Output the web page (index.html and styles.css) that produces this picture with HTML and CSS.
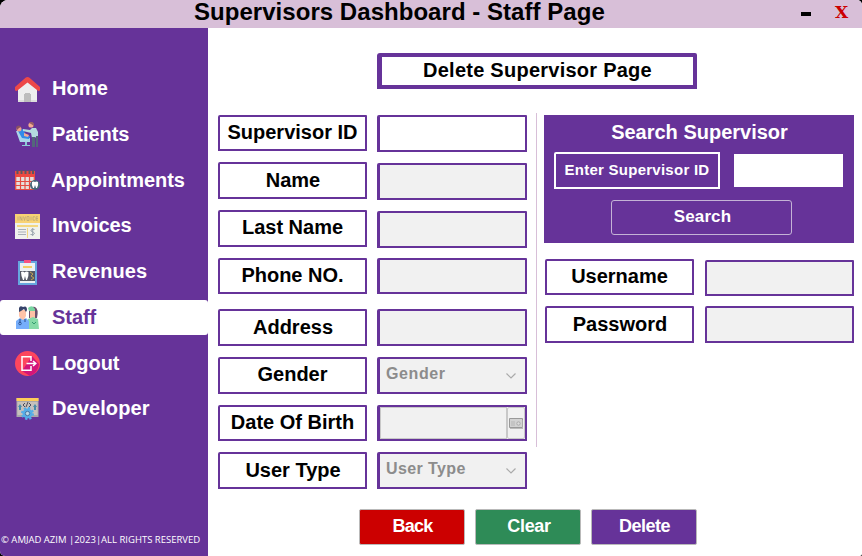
FILE: index.html
```html
<!DOCTYPE html>
<html lang="en">
<head>
<meta charset="utf-8">
<title>Supervisors Dashboard - Staff Page</title>
<link rel="stylesheet" href="styles.css">
</head>
<body>
<div class="window">
  <header class="titlebar">
    <h1>Supervisors Dashboard - Staff Page</h1>
    <div class="controls"><span class="minimize"></span><span class="close">X</span></div>
  </header>
  <div class="body">
    <aside class="sidebar">
      <nav>
        <a class="item"><svg viewBox="0 0 25 25"><path d="M3 12 12.500 4 22 12V25H3z" fill="#eee"/><path d="M3 23h19v2H3z" fill="#ddd"/><path d="M9 25v-8h1v-1h5v1h1v8z" fill="#bdbdbd"/><path d="M0 10 10.500.8Q12.500-.6 14.500.8L25 10v3q-1 2-3 0L12.500 5.500 3 13Q1 15 0 13z" fill="#ed4848"/></svg><span class="wide">Home</span></a>
        <a class="item"><svg viewBox="0 0 25 25"><path d="M1 9h4l3 6 7 1v4H5z" fill="#a9d6ea"/><path d="M3 9l5-2 3 6 4 1-1 3-7-1z" fill="#328be9"/><path d="M9 11l5 2-1 2-4-1z" fill="#f4ad95"/><circle cx="4" cy="7" r="2.500" fill="#efa28f"/><path d="M1 5q3-3 5 0l-2 1-2 2z" fill="#8a5261"/><path d="M10 20h2v3h3v1H7v-1h3z" fill="#8cc9d6"/><circle cx="16" cy="3" r="2.600" fill="#f5aa91"/><path d="M14 1q3-3 5 1v2l-3-2z" fill="#985f68"/><path d="M17 6h4l2 4v5l-6 1-1-5-8-2V7l7 1z" fill="#b4dcdf"/><path d="M17 15h3v10h-3zM21 14h2v11h-2z" fill="#53677b"/></svg><span>Patients</span></a>
        <a class="item"><svg viewBox="0 0 25 25"><path d="M0 3h20v19H0z" fill="#e6dedb"/><path d="M0 3h20v6H0z" fill="#ed4940"/><g stroke="#e54b42" stroke-width="1.200"><path d="M0 21.500h20M0 17.500h20M0 13.500h20M.7 9v13M5.500 9v13M10 9v13M14.500 9v13M19.300 9v8"/></g><path d="M1.500 2h2v4h-2zM5.500 2h2v4h-2zM9.500 2h2v4h-2zM13.500 2h2v4h-2zM17 2h2v4h-2z" fill="#5c5661"/><circle cx="20" cy="17" r="5" fill="#46677a"/><path d="M17 14q1.500-1 3 0 1.500-1 3 0 .7 2-1 6h-1l-1-3-1 3h-1q-1.700-4-1-6z" fill="#fff"/></svg><span class="pull">Appointments</span></a>
        <a class="item"><svg viewBox="0 0 25 25"><path d="M0 0h25v25H0z" fill="#f0f1ed"/><path d="M0 0h25v9H0z" fill="#f8d274"/><path d="M3 2.500v4M5 6.500v-4l2 4v-4M8.500 2.500l1 4 1-4M12 2.500h2v4h-2zM16 2.500v4M20 2.800h-2v3.400h2M23 2.800h-2v3.400h2M21 4.500h2" fill="none" stroke="#b9a778" stroke-width=".8"/><path d="M2 11h21v2H2zM12 14h1v10h-1z" fill="#f4d77f"/><path d="M3 15.500h8M3 18h8M3 20.500h8" stroke="#a9b0b8"/><path d="M19.500 15.500q-4-1-3.500 1.500 3 1 3.500 2.500-1 2-4 1M17.700 14v8" fill="none" stroke="#9aa4ae"/></svg><span>Invoices</span></a>
        <a class="item"><svg viewBox="0 0 25 25"><path d="M3 1h19v24H3z" fill="#66a7de"/><path d="M5 3h15v20H5z" fill="#edf1f3"/><path d="M9 0h7v3H9z" fill="#f65282"/><path d="M8 6h9v2H8z" fill="#f4cd66"/><path d="M5 11h15v10H5z" fill="#555965"/><path d="M6 12q2-1 3.500.4Q11 11 13.500 12q.5 3-1.500 8h-1l-1-4-1 4H8q-2-4-2-8z" fill="#fff"/><path d="M15 12l3 2-2 2 3 2-3 2" fill="none" stroke="#c2a354"/></svg><span class="mid">Revenues</span></a>
        <a class="item active"><svg viewBox="0 0 25 25"><path d="M14 6q1-5 6-4 4 2 2 11h-8z" fill="#6b4f6c"/><path d="M15 6h5v9h-5z" fill="#ffc1a5"/><path d="M13 3q4-4 7 1v2h-6z" fill="#78d6a0"/><path d="M12 24l1-10 5-2 5 2 1 10z" fill="#86daa8"/><path d="M4 5h7v6L9 15H6l-2-4z" fill="#ffc3a9"/><path d="M4 7V3q1-3 4-1 4-2 4 3l-1 2-2-3-3 2z" fill="#37446b"/><path d="M1 24V16l4-3 3 2 3-2 3 3v8z" fill="#76aefb"/><path d="M5 14v4M10 14v3" stroke="#294d8a"/><circle cx="5" cy="18.500" r="1.300" fill="none" stroke="#294d8a" stroke-width=".8"/><path d="M17 17l2 2 2-2" fill="none" stroke="#349b70"/></svg><span>Staff</span></a>
        <a class="item"><svg viewBox="0 0 25 25"><circle cx="12.500" cy="12.500" r="12.500" fill="#fd465e"/><path d="M17 5l7 8q-1 9-9 12l-8-5z" fill="#d2157a"/><path d="M16 10V5.700H7v13.600h9V15M11.500 12.500h9M18 10l2.800 2.500L18 15" fill="none" stroke="#fff" stroke-width="1.500"/></svg><span>Logout</span></a>
        <a class="item"><svg viewBox="0 0 25 25"><path d="M1.500 1h22v19h-22z" fill="#a8a8ab"/><path d="M1.500 1h22v3h-22z" fill="#ffcd59"/><path d="M2.500 5h20v13h-20z" fill="#c7c1bc"/><path d="M3 10l2-3 2 3h-1v3H4v-3zM18 10l2-3 2 3h-1v3h-2v-3z" fill="#498cab"/><path d="M10 6l-2 2 2 2M14 6l2 2-2 2M13 5l-2 5" fill="none" stroke="#4c4e5b"/><circle cx="12.500" cy="16.500" r="5" fill="#55aee8"/><circle cx="12.500" cy="16.500" r="5.500" fill="none" stroke="#55aee8" stroke-width="2" stroke-dasharray="2.300 2"/><circle cx="12.500" cy="16.500" r="2.200" fill="#b9d8e5" stroke="#4776a3"/></svg><span class="mid">Developer</span></a>
      </nav>
      <footer>© AMJAD AZIM |2023|ALL RIGHTS RESERVED</footer>
    </aside>
    <main>
      <h2>Delete Supervisor Page</h2>
      <div class="columns">
        <section class="form">
          <label class="box short">Supervisor ID</label><div class="field enabled"></div>
          <label class="box drop">Name</label><div class="field low"></div>
          <label class="box">Last Name</label><div class="field low"></div>
          <label class="box short">Phone NO.</label><div class="field short"></div>
          <label class="box drop">Address</label><div class="field"></div>
          <label class="box">Gender</label><div class="field combo"><span>Gender</span><svg class="chevron" viewBox="0 0 10 6"><path d="M.5.5 5 5 9.500.5"/></svg></div>
          <label class="box short">Date Of Birth</label><div class="field short date"><span class="entry"></span><span class="picker"><svg viewBox="0 0 14 11"><path d="M.5.500h13v9H.5z" fill="#d2d2d2" stroke="#999"/><path d="M1 10.500h13V2" fill="none" stroke="#bbb"/><path d="M2 3h4v5H2z" fill="#c4c4c4"/><circle cx="9.500" cy="5.500" r="1.700" fill="#ddd" stroke="#aaa"/></svg></span></div>
          <label class="box drop">User Type</label><div class="field combo"><span class="tight">User Type</span><svg class="chevron" viewBox="0 0 10 6"><path d="M.5.5 5 5 9.500.5"/></svg></div>
        </section>
        <div class="divider"></div>
        <section class="side">
          <div class="search">
            <h3>Search Supervisor</h3>
            <div class="query"><label>Enter Supervisor ID</label><div class="input"></div></div>
            <button class="go">Search</button>
          </div>
          <div class="login">
            <label class="box short">Username</label><div class="field thin short low"></div>
            <label class="box drop">Password</label><div class="field thin"></div>
          </div>
        </section>
      </div>
      <div class="actions"><button class="back">Back</button><button class="clear">Clear</button><button class="delete">Delete</button></div>
    </main>
  </div>
</div>
</body>
</html>
```
FILE: styles.css
```css
* { box-sizing: border-box; }
html, body { margin: 0; height: 100%; background: #000; overflow: hidden; }
body { font-family: "Liberation Sans", Arial, sans-serif; font-weight: bold; color: #000; }
h1, h2, h3 { margin: 0; font-weight: bold; }
.window { width: 862px; height: 556px; display: flex; flex-direction: column; overflow: hidden; border-radius: 8px 5px 2px 5px; background: #fff; }
.titlebar { height: 28px; flex: none; display: flex; justify-content: space-between; background: #d8bfd8; padding-left: 194px; }
h1 { font-size: 24px; line-height: 24px; letter-spacing: .04px; white-space: nowrap; }
.controls { display: flex; padding-right: 14px; gap: 24px; }
.minimize { width: 10px; height: 4px; margin-top: 12px; background: #000; }
.close { width: 13px; display: flex; justify-content: center; color: #c00; font: bold 17px/24px "DejaVu Serif", serif; }
.body { display: flex; flex: 1; }
.sidebar { width: 208px; flex: none; display: flex; flex-direction: column; justify-content: space-between; background: #639; color: #fff; padding-top: 43.5px; }
nav { display: flex; flex-direction: column; gap: 10.750px; }
.item { height: 35px; display: flex; align-items: center; gap: 12px; padding-left: 15px; font-size: 20px; border-radius: 3px; }
.item svg { width: 25px; height: 25px; }
.item span { line-height: 24px; margin-top: -2px; letter-spacing: -.05px; }
.item .wide { letter-spacing: .1px; }
.item .mid { letter-spacing: .1px; }
.item .pull { margin-left: -1px; }
.active { background: #fff; color: #639; }
footer { font: 9.500px/14px "Open Sans", "Noto Sans", sans-serif; padding: 0 0 9px 1px; white-space: nowrap; }
main { flex: 1; padding: 25px 8px 0 10px; }
h2 { width: 320px; height: 36px; margin-left: 159px; border: 4px solid #639; border-left-width: 5px; border-radius: 3px 2px 0 0; font-size: 20px; line-height: 26px; letter-spacing: .25px; text-align: center; }
.columns { display: flex; margin-top: 24px; height: 396px; }
.form { width: 309px; padding-top: 2px; display: grid; grid-template-columns: 149px 150px; column-gap: 10px; grid-template-rows: 47px 48px 48px 51px 48px 48px 47px 37px; align-items: start; }
.box, .field { height: 37px; border: 2px solid #639; border-radius: 2px 1px 0 0; }
.box { display: block; font-size: 20px; line-height: 30px; text-align: center; white-space: nowrap; }
.drop { line-height: 32px; padding-left: 1px; }
.short { height: 36px; }
.field { border-left-width: 3px; background: #f1f1f1; }
.enabled { background: #fff; }
.low { margin-top: 1px; }
.thin { border-left-width: 2px; }
.combo { display: flex; align-items: center; justify-content: space-between; padding: 0 9px 0 6px; color: #8c8c8c; font-size: 16px; letter-spacing: .6px; }
.combo span { margin-top: -3px; }
.combo .tight { letter-spacing: .4px; }
.chevron { width: 10px; height: 6px; fill: none; stroke: #aaa; stroke-width: 1.200; }
.date { display: flex; }
.entry { flex: 1; border: 1px solid #c8c8c8; }
.picker { width: 18px; border: 1px solid #c8c8c8; border-radius: 2px; display: flex; align-items: center; justify-content: center; }
.picker svg { width: 14px; height: 11px; flex: none; }
.divider { width: 1px; height: 334px; margin-left: 9px; background: #d8bfd8; }
.side { width: 310px; margin: 2px 0 0 7px; }
.search { height: 128px; background: #639; color: #fff; padding: 5px 10px 0; display: flex; flex-direction: column; align-items: center; }
h3 { font-size: 20px; line-height: 24px; padding-left: 1px; }
.query { display: flex; justify-content: space-between; width: 290px; margin-top: 8px; }
.query label { width: 166px; height: 37px; border: 2px solid #fff; border-radius: 2px 0 0 0; font-size: 15px; line-height: 31px; letter-spacing: .25px; text-align: center; white-space: nowrap; }
.input { width: 109px; height: 33px; margin: 2px 1px 0 0; background: #fff; }
button { padding: 0; border: 1px solid #b9b9b9; border-radius: 2px; color: #fff; font: bold 18px/30px "Liberation Sans", Arial, sans-serif; height: 36px; }
.go { width: 181px; height: 35px; margin: 11px 0 0 5px; border-color: #c4b3d6; border-radius: 3px; background: #639; font-size: 17px; padding: 0 0 2px 2px; letter-spacing: .1px; }
.login { display: grid; grid-template-columns: 149px 149px; column-gap: 11px; grid-template-rows: 47px 37px; padding: 16px 0 0 1px; align-items: start; }
.actions { display: flex; gap: 10px; margin: 0 0 0 141px; }
.actions button { width: 106px; padding: 0 0 3px 1px; letter-spacing: -.5px; }
.actions .back { background: #c00; letter-spacing: -.7px; }
.actions .clear { background: #2e8b57; letter-spacing: -.3px; padding-left: 2px; }
.actions .delete { background: #639; }
```
